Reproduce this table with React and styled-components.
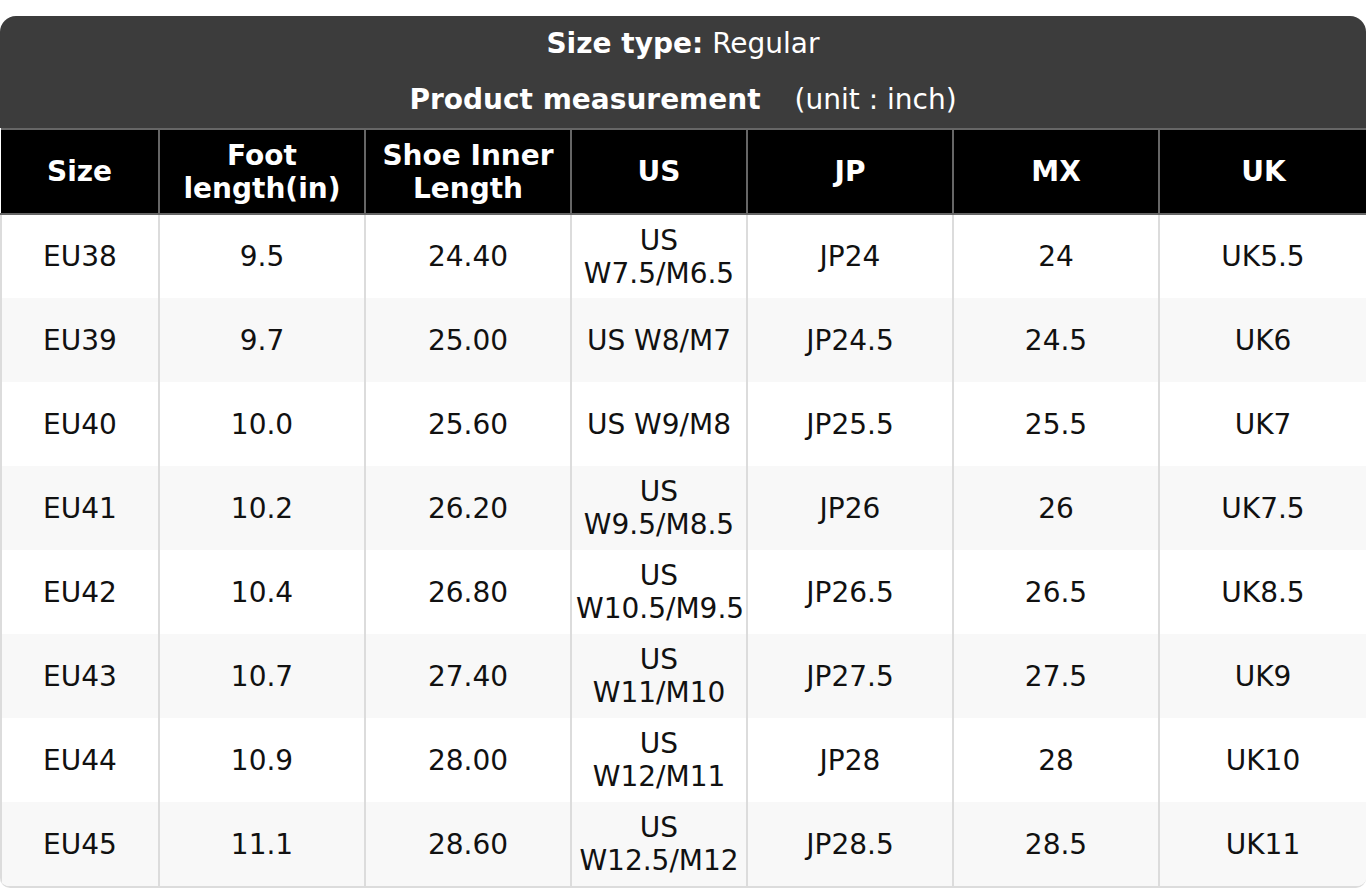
import React from 'react';
import styled, { createGlobalStyle } from 'styled-components';

const GlobalStyle = createGlobalStyle`
  body {
    margin: 0;
    background: #ffffff;
    font-family: 'DejaVu Sans', Verdana, sans-serif;
  }
`;

const Page = styled.div`
  padding-top: 16px;
`;

const Card = styled.div`
  border-radius: 16px 16px 10px 10px;
  overflow: hidden;
  background: #ffffff;
  border-bottom: 2px solid #dcdcdc;
`;

const Banner = styled.div`
  background: #3c3c3c;
  color: #ffffff;
  display: flex;
  flex-direction: column;
  align-items: center;
  gap: 18px;
  padding: 9px 0 9px;
  font-size: 28px;
  line-height: 38px;
`;

const BannerLine = styled.div`
  display: flex;
  align-items: baseline;
`;

const Strong = styled.span`
  font-weight: 700;
  margin-right: ${({ gap }) => gap || 0}px;
`;

const Table = styled.table`
  width: 100%;
  border-collapse: collapse;
  table-layout: fixed;
  font-size: 28px;
  text-align: center;
`;

const HeadRow = styled.tr`
  height: 85px;
`;

const HeadCell = styled.th`
  background: #000000;
  color: #ffffff;
  font-weight: 700;
  padding: 8px 4px;
  line-height: 33px;
  border: 2px solid #666666;
  &:first-child { border-left: none; }
  &:last-child { border-right: none; }
`;

const Row = styled.tr`
  height: 84px;
  background: ${({ striped }) => (striped ? '#f8f8f8' : '#ffffff')};
`;

const Cell = styled.td`
  color: #111111;
  padding: 0 4px;
  line-height: 33px;
  border-left: 2px solid #dcdcdc;
  border-right: 2px solid #dcdcdc;
`;

const widths = [158, 206, 206, 176, 206, 206, 208];

const headers = ['Size', 'Foot length(in)', 'Shoe Inner Length', 'US', 'JP', 'MX', 'UK'];

const rows = [
  ['EU38', '9.5', '24.40', 'US W7.5/M6.5', 'JP24', '24', 'UK5.5'],
  ['EU39', '9.7', '25.00', 'US W8/M7', 'JP24.5', '24.5', 'UK6'],
  ['EU40', '10.0', '25.60', 'US W9/M8', 'JP25.5', '25.5', 'UK7'],
  ['EU41', '10.2', '26.20', 'US W9.5/M8.5', 'JP26', '26', 'UK7.5'],
  ['EU42', '10.4', '26.80', 'US W10.5/M9.5', 'JP26.5', '26.5', 'UK8.5'],
  ['EU43', '10.7', '27.40', 'US W11/M10', 'JP27.5', '27.5', 'UK9'],
  ['EU44', '10.9', '28.00', 'US W12/M11', 'JP28', '28', 'UK10'],
  ['EU45', '11.1', '28.60', 'US W12.5/M12', 'JP28.5', '28.5', 'UK11'],
];

export default function App() {
  return (
    <Page>
      <GlobalStyle />
      <Card>
        <Banner>
          <BannerLine>
            <Strong gap={9}>Size type:</Strong>Regular
          </BannerLine>
          <BannerLine>
            <Strong gap={34}>Product measurement</Strong>(unit : inch)
          </BannerLine>
        </Banner>
        <Table>
          <colgroup>
            {widths.map((w, i) => (
              <col key={i} style={{ width: w }} />
            ))}
          </colgroup>
          <thead>
            <HeadRow>
              {headers.map((h) => (
                <HeadCell key={h}>{h}</HeadCell>
              ))}
            </HeadRow>
          </thead>
          <tbody>
            {rows.map((row, i) => (
              <Row key={row[0]} striped={i % 2 === 1}>
                {row.map((v, j) => (
                  <Cell key={j}>{v}</Cell>
                ))}
              </Row>
            ))}
          </tbody>
        </Table>
      </Card>
    </Page>
  );
}
